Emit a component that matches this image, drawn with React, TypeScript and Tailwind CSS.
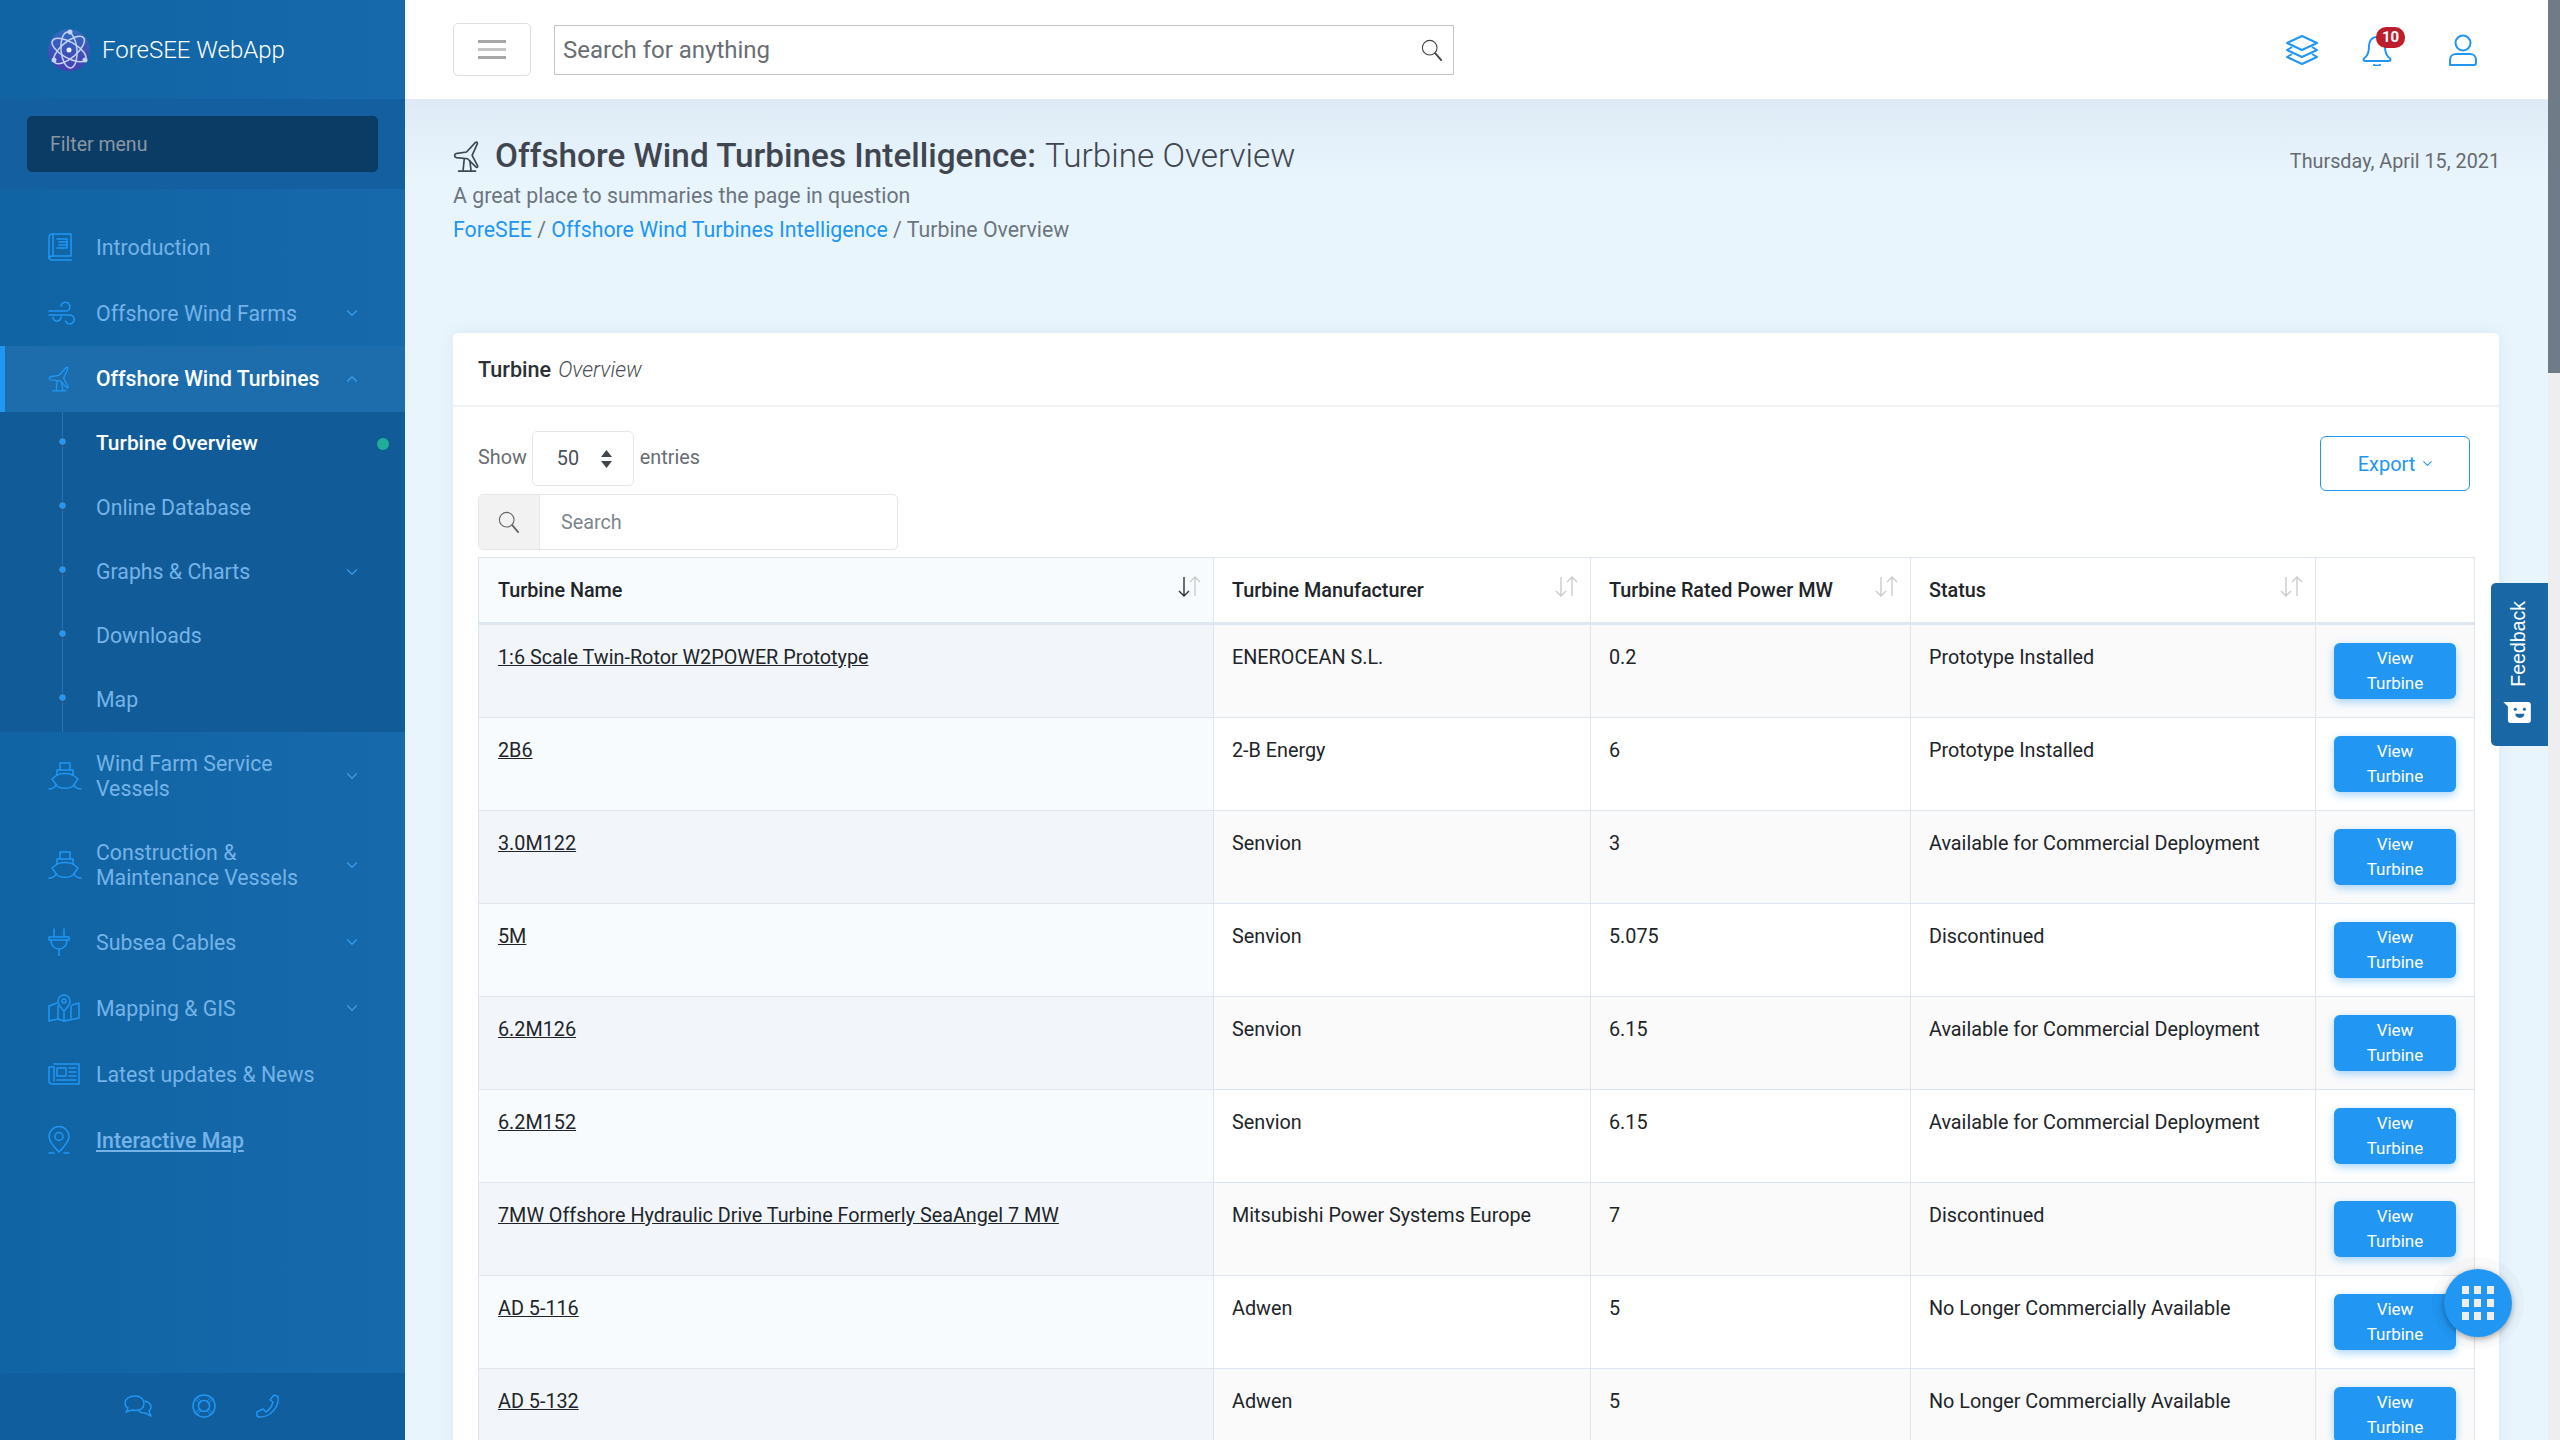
import { ChevronDown, ChevronUp } from 'lucide-react';
import { FC, ReactNode } from 'react';

const font = { fontFamily: 'Roboto, sans-serif' };

const Ico: FC<{ w?: number; h?: number; vb?: string; cls?: string; children: ReactNode }> = ({ w = 32, h = 32, vb = '0 0 32 32', cls = 'text-[#2196f3]', children }) => (
    <svg width={w} height={h} viewBox={vb} fill="none" stroke="currentColor" strokeWidth="1.5" strokeLinecap="round" strokeLinejoin="round" className={cls}>
        {children}
    </svg>
);

const BookIcon = () => (
    <Ico w={24} h={28} vb="0 0 24 28">
        <path d="M1 4a3 3 0 0 1 3-3h19v22H4a3 3 0 0 0-3 2z" />
        <path d="M1 24a3 3 0 0 0 3 3h19.500M5 1v22M9 6h10v9H9M11 9h7M11 12h7" />
    </Ico>
);
const WindIcon = () => (
    <Ico w={28} h={24} vb="0 0 28 24">
        <path d="M1 10h18a4.500 4.500 0 1 0-6-5" />
        <path d="M1 14h21.500a4.500 4.500 0 1 1-5 6" />
        <path d="M5 16.500a4 4 0 0 0 5 3.500c2-.5 3-2 3-4" />
    </Ico>
);
const TurbineIcon: FC<{ cls?: string; w?: number; h?: number }> = ({ cls, w = 22, h = 28 }) => (
    <Ico w={w} h={h} vb="0 0 24 28" cls={cls}>
        <path d="M2.500 11.500L12 10l8-8.500c1.500-1 2 .5 1.500 1.500L17 13l5 9.500c0 1.500-1 1.500-2 .5l-7-7-10-1c-2-.5-2-3-.5-3.500z" />
        <path d="M10 16l-1 10M15 18l1 8M5 27h15" />
    </Ico>
);
const ShipIcon = () => (
    <Ico w={34} h={28} vb="0 0 34 28">
        <path d="M12 8V1h10v7M9 13V8h16v5l5 4-5 7c-3 3-13 3-16 0l-5-7z" />
        <path d="M9 13c4-2 12-2 16 0M1 27c4 0 6-2 7-4M33 27c-4 0-6-2-7-4" />
    </Ico>
);
const PlugIcon = () => (
    <Ico w={22} h={28} vb="0 0 22 28">
        <path d="M6 1v8M16 1v8M1 9h20v3H1zM3 12c0 5 3 9 8 9s8-4 8-9M11 21v7" />
    </Ico>
);
const MapIcon = () => (
    <Ico w={32} h={28} vb="0 0 32 28">
        <path d="M9 9L1 12v15l9-2 6 2 15-3V9l-7 2" />
        <path d="M10 12v13M16 18v9M23 12v12M16 1a6 6 0 0 1 6 6c0 4-6 10-6 10s-6-6-6-10a6 6 0 0 1 6-6z" />
        <circle cx="16" cy="7" r="2" />
    </Ico>
);
const NewsIcon = () => (
    <Ico w={32} h={22} vb="0 0 32 22">
        <path d="M6 1h25v20H4a3 3 0 0 1-3-3V4h5v14M9 5h9v8H9zM21 5h7M21 9h7M21 13h7M9 17h19" />
    </Ico>
);
const PinIcon = () => (
    <Ico w={22} h={28} vb="0 0 22 28">
        <path d="M11 26S1 16 1 10.500a10 10 0 0 1 20 0C21 16 11 26 11 26z" />
        <circle cx="11" cy="10.500" r="4" />
        <path d="M1 27h5M16 27h5" />
    </Ico>
);
const Magnifier: FC<{ size: number; stroke: string }> = ({ size, stroke }) => (
    <svg width={size} height={size} viewBox="0 0 24 24" fill="none" stroke={stroke} strokeLinecap="round">
        <circle cx="9.500" cy="9.500" r="8" strokeWidth="1.200" />
        <path d="M15.500 15.500L22 23" strokeWidth="2" />
    </svg>
);

const navTop = [
    { label: 'Introduction', icon: <BookIcon /> },
    { label: 'Offshore Wind Farms', icon: <WindIcon />, arrow: true },
];
const subItems = [
    { label: 'Turbine Overview', active: true },
    { label: 'Online Database' },
    { label: 'Graphs & Charts', arrow: true },
    { label: 'Downloads' },
    { label: 'Map' },
];
const navBottom = [
    { label: 'Wind Farm Service Vessels', icon: <ShipIcon />, arrow: true, tall: true },
    { label: 'Construction & Maintenance Vessels', icon: <ShipIcon />, arrow: true, tall: true },
    { label: 'Subsea Cables', icon: <PlugIcon />, arrow: true },
    { label: 'Mapping & GIS', icon: <MapIcon />, arrow: true },
    { label: 'Latest updates & News', icon: <NewsIcon /> },
    { label: 'Interactive Map', icon: <PinIcon />, link: true },
];

const rows = [
    ['1:6 Scale Twin-Rotor W2POWER Prototype', 'ENEROCEAN S.L.', '0.2', 'Prototype Installed'],
    ['2B6', '2-B Energy', '6', 'Prototype Installed'],
    ['3.0M122', 'Senvion', '3', 'Available for Commercial Deployment'],
    ['5M', 'Senvion', '5.075', 'Discontinued'],
    ['6.2M126', 'Senvion', '6.15', 'Available for Commercial Deployment'],
    ['6.2M152', 'Senvion', '6.15', 'Available for Commercial Deployment'],
    ['7MW Offshore Hydraulic Drive Turbine Formerly SeaAngel 7 MW', 'Mitsubishi Power Systems Europe', '7', 'Discontinued'],
    ['AD 5-116', 'Adwen', '5', 'No Longer Commercially Available'],
    ['AD 5-132', 'Adwen', '5', 'No Longer Commercially Available'],
];

const NavRow: FC<{ label: string; icon: ReactNode; arrow?: boolean; tall?: boolean; link?: boolean }> = ({ label, icon, arrow, tall, link }) => (
    <div className={`flex items-center pl-12 pr-[44px] ${tall ? 'h-[88.500px]' : 'h-[66px]'}`}>
        <span className="w-[48px] shrink-0 flex items-center">{icon}</span>
        <span className={`flex-1 text-[21.300px] leading-[25px] text-[#74b3e8] ${tall ? 'pr-7' : ''} ${link ? 'underline font-medium' : ''}`}>{label}</span>
        {arrow ? <ChevronDown size={18} strokeWidth={1.5} className="text-[#3a9ff0]" /> : null}
    </div>
);

const SortIcon: FC<{ active?: boolean }> = ({ active }) => (
    <svg width="24" height="22" viewBox="0 0 24 22" fill="none" strokeWidth="1.400" className="absolute right-[12px] top-[18px]">
        <path d="M7 1v19M2 15l5 5 5-5" stroke={active ? '#333' : '#ccc'} />
        <path d="M18 20V1M13 6l5-5 5 5" stroke="#ccc" />
    </svg>
);

export default function App() {
    return (
        <div className="flex h-screen w-full overflow-hidden text-[#212529]" style={font}>
            <aside className="w-[405px] shrink-0 flex flex-col bg-gradient-to-r from-[#1164a3] to-[#1669ab]">
                <div className="h-[99px] flex items-center pl-12 shrink-0">
                    <svg width="42" height="42" viewBox="0 0 42 42" fill="none">
                        <defs>
                            <linearGradient id="logoFill" x1="0" y1="0" x2="0" y2="1">
                                <stop offset="0" stopColor="#2f6cc0" />
                                <stop offset="1" stopColor="#4a3db0" />
                            </linearGradient>
                        </defs>
                        <circle cx="21" cy="21" r="21" fill="url(#logoFill)" />
                        <g stroke="#c3d3f2" strokeWidth="1.500" fill="none">
                            <ellipse cx="21" cy="21" rx="19" ry="8" transform="rotate(30 21 21)" />
                            <ellipse cx="21" cy="21" rx="19" ry="8" transform="rotate(-40 21 21)" />
                            <ellipse cx="21" cy="21" rx="18" ry="8" transform="rotate(85 21 21)" />
                        </g>
                        <circle cx="21" cy="21" r="2.500" fill="#e8f0ff" />
                        <circle cx="22" cy="3" r="2.500" fill="#c3d3f2" />
                        <circle cx="6" cy="31" r="2.500" fill="#c3d3f2" />
                        <circle cx="37" cy="31" r="2.500" fill="#c3d3f2" />
                    </svg>
                    <span className="ml-[12px] text-[24px] font-light text-white">ForeSEE WebApp</span>
                </div>
                <div className="h-[90px] shrink-0 flex items-center px-[27px] bg-[#135f9f]">
                    <div className="w-[351px] h-[56px] rounded-[5px] bg-[#0b3c66] border border-[#0a3a60] flex items-center pl-[22px] pt-px text-[19.500px] text-[#8a97a3]">Filter menu</div>
                </div>
                <nav className="pt-[25px] flex-1 min-h-0">
                    {navTop.map((n) => <NavRow key={n.label} {...n} />)}
                    <div className="h-[66px] flex items-center pl-[43px] pr-[44px] bg-[#1d6cab] border-l-[5px] border-[#2196f3]">
                        <span className="w-[48px] shrink-0 flex items-center"><TurbineIcon /></span>
                        <span className="flex-1 text-[21.200px] font-medium text-white">Offshore Wind Turbines</span>
                        <ChevronUp size={18} strokeWidth={1.5} className="text-[#3a9ff0]" />
                    </div>
                    <div className="relative bg-[#115c98] h-[320px]">
                        <div className="absolute left-[62px] top-0 bottom-0 w-px bg-[#1f76b8]" />
                        {subItems.map((s) => (
                            <div key={s.label} className="relative h-[64px] flex items-center pl-[96px] pr-[44px]">
                                <span className="absolute left-[58px] top-[25px] w-[9px] h-[9px] rounded-full bg-[#2196f3] border border-[#33475b]" />
                                <span className={`flex-1 ${s.active ? 'text-[20.900px] font-medium text-white' : 'text-[21.300px] text-[#74b3e8]'}`}>{s.label}</span>
                                {s.arrow ? <ChevronDown size={18} strokeWidth={1.5} className="text-[#3a9ff0]" /> : null}
                                {s.active ? <span className="absolute right-[16px] top-[26px] w-[12px] h-[12px] rounded-full bg-[#22ac9a]" /> : null}
                            </div>
                        ))}
                    </div>
                    {navBottom.map((n) => <NavRow key={n.label} {...n} />)}
                </nav>
                <div className="h-[67px] shrink-0 bg-[#105e9e] flex items-center justify-center gap-[40px] pb-[2px] pr-[2px]">
                    <Ico w={28} h={22} vb="0 0 28 22">
                        <path d="M11 1C5 1 1 4 1 8c0 2 1 4 3 5l-2 4 6-2c1 0 2 .5 3 .5 6 0 9-3 9-7s-3-7.500-9-7.500z" />
                        <path d="M21 6c3 1 6 3 6 6 0 2-1 3-2 4l2 5-6-3c-2 0-4 0-6-1.500" />
                    </Ico>
                    <Ico w={24} h={24} vb="0 0 24 24">
                        <circle cx="12" cy="12" r="11" />
                        <circle cx="12" cy="12" r="5.500" />
                        <path d="M4.500 2.800l5 5M2.800 4.500l5 5M19.500 2.800l-5 5M21.200 4.500l-5 5M4.500 21.200l5-5M2.800 19.500l5-5M19.500 21.200l-5-5M21.200 19.500l-5-5" strokeWidth="1" />
                    </Ico>
                    <Ico w={24} h={24} vb="0 0 24 24">
                        <path d="M18 1l4 1.500c1 7-3 13.500-8 17.500-3 2-7 3-11 3l-2-1v-4l6-3 3 3c3-2 6-6 7-10l-3-2z" />
                    </Ico>
                </div>
            </aside>

            <main className="flex-1 min-w-0 flex flex-col bg-[#e9f5fd]">
                <header className="h-[99px] shrink-0 bg-white flex items-center pl-12 pr-[70px]">
                    <div className="w-[78px] h-[53px] rounded-[5px] border border-[#dcdfe3] flex items-center justify-center">
                        <div className="w-[28px] flex flex-col gap-[5px]">
                            <span className="h-[3px] bg-[#a8a8a8]" />
                            <span className="h-[3px] bg-[#c4c4c4]" />
                            <span className="h-[3px] bg-[#a8a8a8]" />
                        </div>
                    </div>
                    <div className="ml-[23px] w-[900px] h-[50px] border border-[#c4c4c4] rounded-[1px] flex items-center pl-[8px] pr-[10px]">
                        <span className="flex-1 text-[24px] text-[#686e73]">Search for anything</span>
                        <Magnifier size={22} stroke="#444" />
                    </div>
                    <div className="ml-auto flex items-center gap-[44px]">
                        <svg width="32" height="32" viewBox="0 0 32 32" fill="none" stroke="#2196f3" strokeWidth="2" strokeLinejoin="round">
                            <path d="M16 2L31 9l-15 7L1 9z" />
                            <path d="M6 13l-5 3 15 7 15-7-5-3" />
                            <path d="M6 20l-5 3 15 7 15-7-5-3" />
                        </svg>
                        <div className="relative w-[30px] h-[32px]">
                            <svg width="30" height="32" viewBox="0 0 30 32" fill="none" stroke="#2196f3" strokeWidth="2" strokeLinejoin="round" strokeLinecap="round">
                                <path d="M15 3c-5 0-8 4-8 9 0 6-1 9-3.500 11-1.500 1-2 2-2 2.500 0 1 1 1.500 2 1.500h23c1 0 2-.5 2-1.500 0-.5-.5-1.500-2-2.500-2.500-2-3.500-5-3.500-11 0-5-3-9-8-9z" />
                                <path d="M12 31c1 1 5 1 6 0" />
                            </svg>
                            <span className="absolute left-[14px] -top-[7px] w-[29px] h-[21px] rounded-[10px] bg-[#bd1e2c] text-white text-[15px] font-bold leading-[21px] text-center">10</span>
                        </div>
                        <svg className="ml-[12px]" width="30" height="32" viewBox="0 0 30 32" fill="none" stroke="#2196f3" strokeWidth="2">
                            <circle cx="15" cy="9" r="7.500" />
                            <path d="M2 31v-5c0-4 3-6 6-6h14c3 0 6 2 6 6v3c0 1-1 2-2 2z" strokeLinejoin="round" />
                        </svg>
                    </div>
                </header>

                <div className="flex-1 min-h-0 px-[49px] pl-12 bg-gradient-to-b from-[#deebf6] from-0% to-[#e9f5fd] to-[6%]">
                    <div className="h-[234px] relative pt-[34px]">
                        <div className="flex items-center h-[46px]">
                            <span className="w-[42px] flex"><TurbineIcon cls="text-[#3d4752]" w={27} h={33} /></span>
                            <h1 className="text-[33.300px] font-medium text-[#3f4650]">Offshore Wind Turbines Intelligence:</h1>
                            <span className="ml-[9px] text-[33.300px] font-light text-[#3f4650]">Turbine Overview</span>
                        </div>
                        <p className="mt-[2px] text-[21.300px] leading-[30px] text-[#6c757d]">A great place to summaries the page in question</p>
                        <p className="mt-[4px] text-[21.300px] leading-[30px] text-[#6c757d]">
                            <span className="text-[#2196f3]">ForeSEE</span> / <span className="text-[#2196f3]">Offshore Wind Turbines Intelligence</span> / Turbine Overview
                        </p>
                        <span className="absolute -right-px top-[48px] text-[19.800px] text-[#666b70]">Thursday, April 15, 2021</span>
                    </div>

                    <section className="bg-white rounded-t-[5px] shadow-[0_0_16px_rgba(40,90,130,0.08)] h-[1200px]">
                        <div className="h-[74px] border-b-2 border-[#f1f2f4] flex items-center pl-[25px] pt-[2px] text-[21.600px]">
                            <span className="font-medium text-[#2c3136]">Turbine</span>
                            <span className="ml-[7px] italic font-light text-[#4a4f55]">Overview</span>
                        </div>
                        <div className="px-[25px] pt-[24px] relative">
                            <div className="flex items-start h-[63px]">
                                <span className="text-[19.800px] text-[#676d73] mt-[12px]">Show</span>
                                <div className="ml-[5px] w-[102px] h-[55px] rounded-[5px] border border-[#e4e7ea] flex items-center pl-[24px] pr-[20px] pt-px text-[19.800px] text-[#495057]">
                                    <span className="flex-1">50</span>
                                    <svg width="13" height="22" viewBox="0 0 13 22" fill="#3f464d">
                                        <path d="M6.500 2L12 9H1zM6.500 20L1 13h11z" />
                                    </svg>
                                </div>
                                <span className="ml-[6px] text-[19.800px] text-[#676d73] mt-[12px]">entries</span>
                            </div>
                            <div className="absolute right-[29px] top-[29px] w-[150px] h-[55px] rounded-[6px] border border-[#2196f3] flex items-center justify-center gap-[5px] pl-[3px] text-[20px] text-[#2196f3]">
                                Export <ChevronDown size={15} strokeWidth={1.700} />
                            </div>
                            <div className="w-[420px] h-[56px] rounded-[5px] border border-[#e3e6e9] flex overflow-hidden">
                                <div className="w-[61px] bg-[#f2f2f2] border-r border-[#e3e6e9] flex items-center justify-center">
                                    <Magnifier size={22} stroke="#666" />
                                </div>
                                <span className="pl-[21px] pt-px flex items-center text-[19.800px] text-[#7d858c]">Search</span>
                            </div>
                            <table className="mt-[7px] w-[1996px] table-fixed border-collapse text-[19.800px]">
                                <colgroup>
                                    <col className="w-[735px]" />
                                    <col className="w-[377px]" />
                                    <col className="w-[320px]" />
                                    <col className="w-[405px]" />
                                    <col className="w-[159px]" />
                                </colgroup>
                                <thead>
                                    <tr className="h-[66px] border-b-[3px] border-[#dee6ef]">
                                        {['Turbine Name', 'Turbine Manufacturer', 'Turbine Rated Power MW', 'Status', ''].map((h, i) => (
                                            <th key={h} className={`relative border border-[#dee5ec] border-b-[3px] border-b-[#dee6ef] px-[18px] pt-[2px] text-left font-medium text-[#212529] ${i === 0 ? 'pl-[19px] bg-[#f7fbfe]' : 'bg-white'}`}>
                                                {h}
                                                {i < 4 ? <SortIcon active={i === 0} /> : null}
                                            </th>
                                        ))}
                                    </tr>
                                </thead>
                                <tbody>
                                    {rows.map((r, i) => (
                                        <tr key={r[0]} className={`${i === 0 ? 'h-[94px]' : 'h-[93px]'} ${i % 2 === 0 ? 'bg-[#fafafb]' : 'bg-white'}`}>
                                            <td className={`border border-[#dee5ec] pl-[19px] pr-[18px] pt-[18px] align-top leading-[30px] underline ${i % 2 === 0 ? 'bg-[#f2f6fb]' : 'bg-[#f8fbfe]'}`}>{r[0]}</td>
                                            <td className="border border-[#dee5ec] px-[18px] pt-[18px] align-top leading-[30px]">{r[1]}</td>
                                            <td className="border border-[#dee5ec] px-[18px] pt-[18px] align-top leading-[30px]">{r[2]}</td>
                                            <td className="border border-[#dee5ec] px-[18px] pt-[18px] align-top leading-[30px]">{r[3]}</td>
                                            <td className="border border-[#dee5ec] align-top pt-[18px]">
                                                <div className="mx-auto w-[122px] h-[56px] rounded-[6px] bg-[#2196f3] shadow-[0_3px_8px_rgba(33,150,243,0.4)] text-white text-[17px] leading-[25px] text-center pt-[3px]">View<br />Turbine</div>
                                            </td>
                                        </tr>
                                    ))}
                                </tbody>
                            </table>
                        </div>
                    </section>
                </div>
            </main>

            <div className="w-[12px] shrink-0 bg-[#eeeeee]">
                <div className="h-[373px] bg-[#6f7c88]" />
            </div>

            <div className="absolute right-[12px] top-[583px] w-[57px] h-[163px] bg-[#1967a5] rounded-l-[5px] flex flex-col items-center pt-[18px] pr-[3px]">
                <span className="text-white text-[19.500px] leading-[24px] [writing-mode:vertical-rl] rotate-180" style={{ fontFamily: '"Liberation Sans", sans-serif' }}>Feedback</span>
                <svg className="mt-[14px]" width="30" height="22" viewBox="0 0 32 24" fill="white">
                    <path d="M0 1h27a3 3 0 0 1 3 3v17a3 3 0 0 1-3 3H8a3 3 0 0 1-3-3V6z" />
                    <circle cx="13" cy="9" r="1.700" fill="#1967a5" />
                    <circle cx="23" cy="9" r="1.700" fill="#1967a5" />
                    <path d="M13 14h10c0 3-2 4.500-5 4.500S13 17 13 14z" fill="#1967a5" />
                </svg>
            </div>

            <div className="absolute left-[2444px] top-[1269px] w-[68px] h-[68px] rounded-full bg-[#2196f3] shadow-[0_2px_6px_rgba(0,0,0,0.35),0_0_0_12px_rgba(0,0,0,0.02)] grid grid-cols-3 gap-[5px] p-[18px] place-content-center">
                {[0, 1, 2, 3, 4, 5, 6, 7, 8].map((n) => <span key={n} className="w-[7px] h-[8px] bg-[#eeeeee]" />)}
            </div>
        </div>
    );
}
